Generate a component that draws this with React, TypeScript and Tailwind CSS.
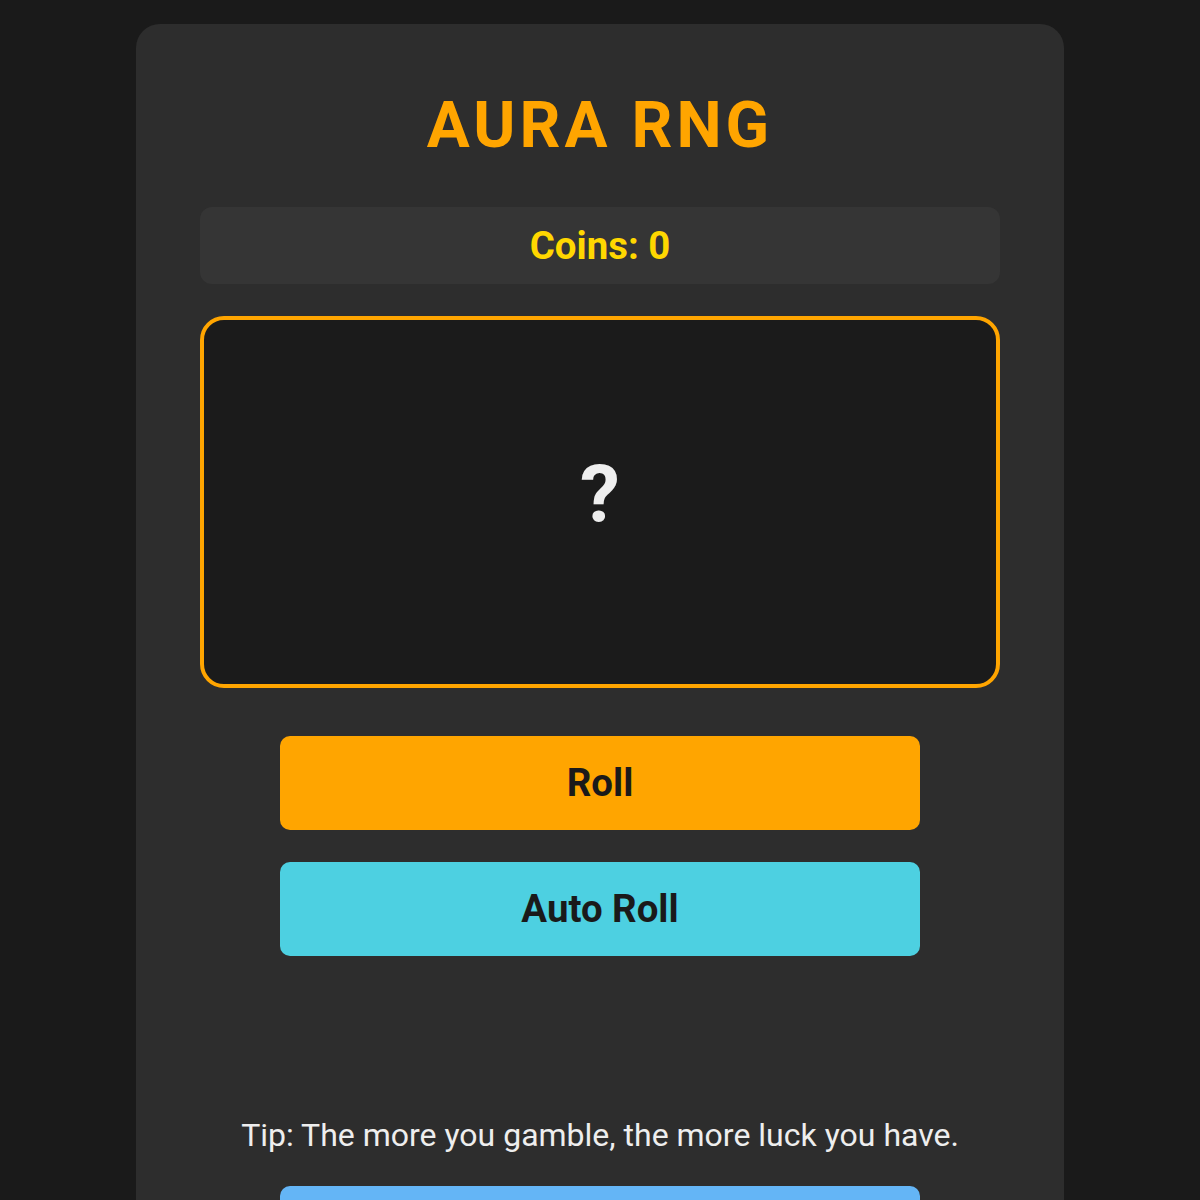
import React from "react";

const font = { fontFamily: "Roboto, 'Liberation Sans', sans-serif" };

export default function App() {
  return (
    <div
      className="min-h-screen bg-[#1a1a1a] flex justify-center pt-6"
      style={font}
    >
      <div className="w-[928px] min-h-[1300px] rounded-[24px] bg-[#2d2d2d] px-16 pt-[70px] flex flex-col items-center">
        <h1 className="text-[64px] leading-none font-bold tracking-[4px] text-[#ffa500]">
          AURA RNG
        </h1>

        <div className="mt-[49px] w-full h-[77px] rounded-xl bg-[#353535] flex items-center justify-center">
          <span className="text-[38.4px] font-bold text-[#ffd700]">Coins: 0</span>
        </div>

        <div className="mt-8 w-full h-[372px] rounded-[24px] border-4 border-[#ffa500] bg-[#1b1b1b] flex items-center justify-center pb-[14px]">
          <span className="text-[80px] font-bold text-[#eeeeee]">?</span>
        </div>

        <button className="mt-12 w-[640px] h-[94px] rounded-[10px] bg-[#ffa500] text-[38.4px] font-bold text-[#1a1a1a]">
          Roll
        </button>
        <button className="mt-8 w-[640px] h-[94px] rounded-[10px] bg-[#4dd0e1] text-[38.4px] font-bold text-[#1a1a1a]">
          Auto Roll
        </button>

        <p className="mt-[155px] text-[32px] text-[#eeeeee]">
          Tip: The more you gamble, the more luck you have.
        </p>

        <button className="mt-[27px] w-[640px] h-[94px] rounded-[10px] bg-[#64b5f6] text-[38.4px] font-bold text-[#1a1a1a]">
          Settings
        </button>
      </div>
    </div>
  );
}
